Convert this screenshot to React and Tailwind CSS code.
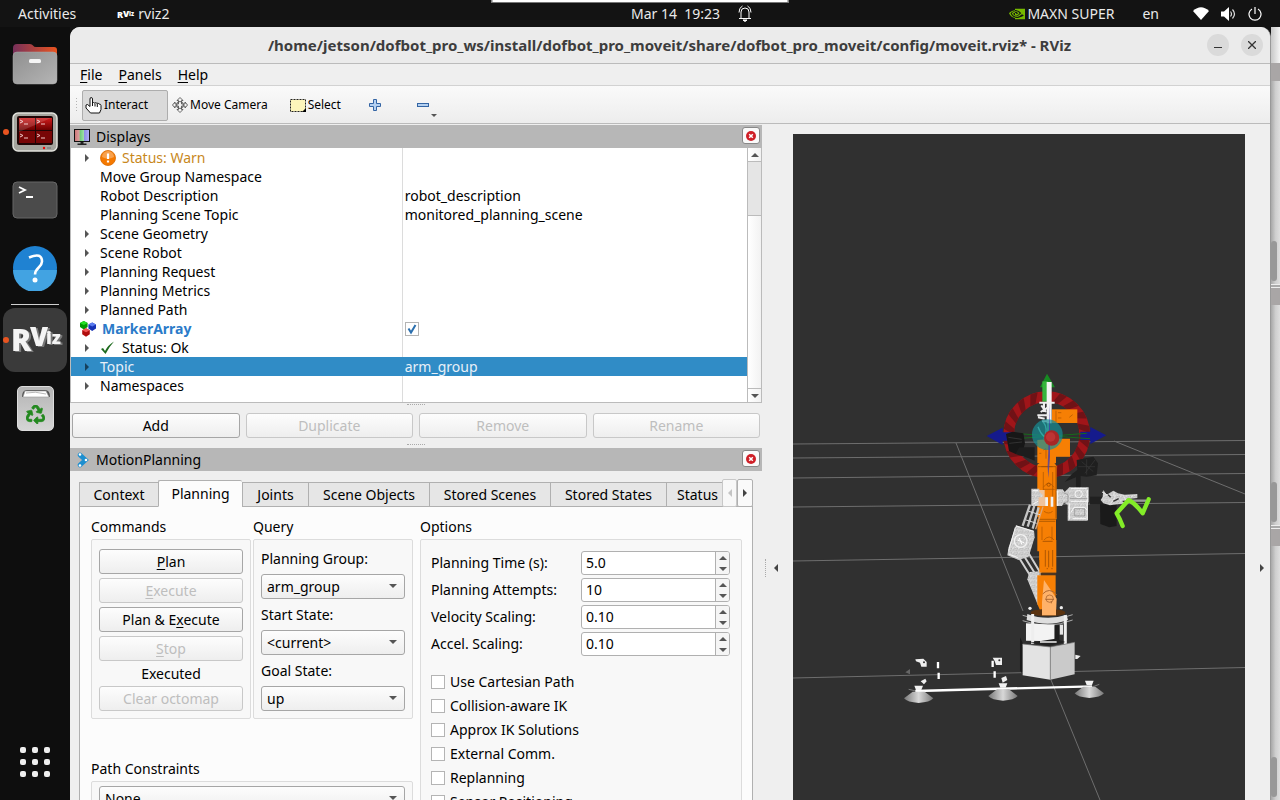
import React, { useState } from "react";
import clsx from "clsx";
import { FaRecycle } from "react-icons/fa";
import { SiNvidia } from "react-icons/si";

const TREE = [
  { label: "Status: Warn", arrow: true, icon: "warn", tone: "text-[#c8881c]" },
  { label: "Move Group Namespace" },
  { label: "Robot Description", value: "robot_description" },
  { label: "Planning Scene Topic", value: "monitored_planning_scene" },
  { label: "Scene Geometry", arrow: true },
  { label: "Scene Robot", arrow: true },
  { label: "Planning Request", arrow: true },
  { label: "Planning Metrics", arrow: true },
  { label: "Planned Path", arrow: true },
  { label: "MarkerArray", icon: "marker", top: true, check: true },
  { label: "Status: Ok", arrow: true, icon: "ok" },
  { label: "Topic", arrow: true, value: "arm_group", selected: true },
  { label: "Namespaces", arrow: true },
];

const TABS = [
  { label: "Context", width: "w-[79px]" },
  { label: "Planning", width: "w-[84px]" },
  { label: "Joints", width: "w-[66px]" },
  { label: "Scene Objects", width: "w-[121px]" },
  { label: "Stored Scenes", width: "w-[121px]" },
  { label: "Stored States", width: "w-[116px]" },
  { label: "Status", width: "w-[78px]" },
];

const SPINS = [
  ["Planning Time (s):", "5.0"],
  ["Planning Attempts:", "10"],
  ["Velocity Scaling:", "0.10"],
  ["Accel. Scaling:", "0.10"],
];

const CHECKS = [
  "Use Cartesian Path",
  "Collision-aware IK",
  "Approx IK Solutions",
  "External Comm.",
  "Replanning",
  "Sensor Positioning",
];

const Triangle = ({ dir, className }) => {
  const shapes = {
    up: ["0 0 8 5", "0,5 4,0 8,5", "w-2 h-1"],
    down: ["0 0 8 5", "0,0 4,5 8,0", "w-2 h-1"],
    left: ["0 0 5 8", "5,0 0,4 5,8", "w-1 h-2"],
    right: ["0 0 5 8", "0,0 5,4 0,8", "w-1 h-2"],
  };
  const [box, points, size] = shapes[dir];
  return (
    <svg viewBox={box} preserveAspectRatio="none" className={clsx("shrink-0 fill-current", size, className)}>
      <polygon points={points} />
    </svg>
  );
};

/* ---------- top bar ---------- */

const TopBar = () => (
  <header className="relative flex h-[27px] shrink-0 items-center bg-[#131313] text-sm text-[#eaeaea]">
    <div className="absolute left-1/2 top-0 h-[3px] w-[297px] -translate-x-1/2 border border-t-0 border-[#777] bg-white" />
    <div className="flex flex-1 items-center">
      <button className="ml-[18px]">Activities</button>
      <button className="ml-10 flex items-center gap-1">
        <svg
          viewBox="0 0 18 14"
          className="h-3.5 w-[18px] overflow-visible"
          fill="#fff"
          fontWeight="900"
          fontFamily="Noto Sans, sans-serif"
        >
          <text x="1" y="11" fontSize="9">
            R
          </text>
          <text x="7" y="10" fontSize="9">
            V
          </text>
          <text x="13" y="9" fontSize="6">
            iz
          </text>
        </svg>
        rviz2
      </button>
    </div>
    <button className="ml-[103px] flex items-center">
      <span className="whitespace-pre">Mar 14  19:23</span>
      <svg viewBox="0 0 14 17" className="ml-[18px] h-[17px] w-3.5 fill-none stroke-white">
        <path d="M3 13.5V7a4 4 0 0 1 8 0v6.500M1 13.500h12M1 7.500Q1 2.500 4.500 1M13 7.500Q13 2.500 9.500 1" />
        <path d="M5 15h4l-2 1.500z" fill="#fff" />
      </svg>
    </button>
    <div className="flex flex-1 items-center justify-end">
      <SiNvidia size={16} className="text-[#76b900]" />
      <span className="ml-0.5">MAXN SUPER</span>
      <button className="ml-7">en</button>
      <button className="ml-[34px] mr-[18px] flex items-center gap-3" aria-label="System menu">
        <svg viewBox="0 0 16 13" className="h-[13px] w-4 fill-white">
          <path d="M0 4Q8-3.500 16 4L8 13z" />
        </svg>
        <svg viewBox="0 0 15 14" className="h-3.5 w-[15px]">
          <path d="M0 4.500h3L8 0v14L3 9.500H0z" fill="#fff" />
          <path d="M9.500 4.500q2 2.500 0 5M11.500 2.500q4 4.500 0 9" fill="none" stroke="#ddd" strokeWidth="1.200" />
        </svg>
        <svg viewBox="0 0 14 14" className="h-3.5 w-3.5 fill-none stroke-white">
          <path d="M4 2a6 6 0 1 0 6 0M7 0v7" strokeWidth="1.200" />
        </svg>
      </button>
    </div>
  </header>
);

/* ---------- dock ---------- */

const FilesIcon = () => (
  <svg viewBox="0 0 46 46" className="h-[46px] w-[46px]">
    <defs>
      <linearGradient id="folderBack">
        <stop offset="0" stopColor="#77305a" />
        <stop offset="1" stopColor="#e95420" />
      </linearGradient>
      <linearGradient id="folderFront" x1="0" y1="0" x2="1" y2="1">
        <stop offset="0" stopColor="#8f8f8f" />
        <stop offset="1" stopColor="#b5b5b5" />
      </linearGradient>
    </defs>
    <path d="M1 7q0-4 4-4h13q2 0 3 1.500T24 6h18q3 0 3 3v18H1z" fill="url(#folderBack)" />
    <rect x="1" y="11" width="44" height="32" rx="4" fill="url(#folderFront)" stroke="#aaa" strokeWidth=".5" />
    <rect x="17" y="18" width="12" height="4" rx="1.500" fill="#f5f5f5" />
  </svg>
);

const TerminatorIcon = () => (
  <svg viewBox="0 0 46 42" className="h-[42px] w-[46px]">
    <defs>
      <linearGradient id="termRed" x1="0" y1="0" x2="0" y2="1">
        <stop offset="0" stopColor="#d01c1c" />
        <stop offset="1" stopColor="#6c0000" />
      </linearGradient>
    </defs>
    <rect x="1" y="2" width="44" height="38" rx="5" fill="#a5a59e" stroke="#e2e2dc" strokeWidth="1.500" />
    <rect x="5" y="5" width="36" height="29" rx="2" fill="#200606" />
    <rect x="7" y="7" width="16" height="12" fill="url(#termRed)" />
    <rect x="24" y="7" width="16" height="12" fill="url(#termRed)" />
    <rect x="7" y="20" width="16" height="12" fill="#780606" />
    <rect x="24" y="20" width="16" height="12" fill="#780606" />
    <path
      d="M8 9l3 1.500-3 1.500M12 13h4M25 9l3 1.500-3 1.500M29 13h4M8 23l3 1.500-3 1.500M12 27h4M25 23l3 1.500-3 1.500M29 27h4"
      fill="none"
      stroke="#f0c8c8"
    />
    <path d="M7 7h32l-32 14z" fill="#fff" opacity=".15" />
    <circle cx="32" cy="37" r="1.200" fill="#e00" />
    <rect x="35" y="36" width="4" height="2" fill="#888" />
  </svg>
);

const TerminalIcon = () => (
  <svg viewBox="0 0 46 38" className="h-[38px] w-[46px]">
    <rect x="1" y="1" width="44" height="36" rx="4" fill="#4b4b4b" stroke="#676767" />
    <path d="M7 6l6 3-6 3M14 16h7" fill="none" stroke="#fff" strokeWidth="1.800" />
  </svg>
);

const HelpIcon = () => (
  <svg viewBox="0 0 46 46" className="h-[46px] w-[46px]">
    <circle cx="23" cy="23" r="22" fill="#1f82d2" />
    <path d="M1 25a22 22 0 0 0 44 0z" fill="#42a3e2" />
    <path d="M17 12.500Q30 7 30 16.500c0 6-7 6-7 13" fill="none" stroke="#fff" strokeWidth="2.600" />
    <circle cx="23" cy="35" r="2.500" fill="#fff" />
  </svg>
);

const RVizLogo = () => (
  <svg
    viewBox="0 0 64 64"
    className="h-16 w-16 drop-shadow-[2px_1px_0_#777]"
    fontFamily="Noto Sans, sans-serif"
    fontWeight="900"
    fill="#f4f4f4"
  >
    <text x="8" y="43" fontSize="30">
      R
    </text>
    <text x="27" y="38" fontSize="26">
      V
    </text>
    <text x="43" y="36" fontSize="18">
      iz
    </text>
  </svg>
);

const TrashIcon = () => (
  <span className="relative flex h-[45px] w-[37px] items-end justify-center rounded-[5px] border border-[#ddd] bg-linear-to-b from-[#b4b4b4] to-[#d5d5d5] pb-1.5">
    <svg viewBox="0 0 30 9" className="absolute left-[3px] top-0.5 h-[9px] w-[30px]">
      <path d="M1 8Q1 1 6 1h18q5 0 5 7z" fill="#555" />
      <path d="M2 8l2-6h21l3 6z" fill="#fff" stroke="#999" strokeWidth=".6" />
      <path d="M5 4q9-2 20 1" fill="none" stroke="#999" strokeWidth=".7" />
    </svg>
    <FaRecycle size={19} className="text-[#23891f]" stroke="#23891f" strokeWidth={20} />
  </span>
);

const DockButton = ({ label, running, active, children }) => (
  <button
    aria-label={label}
    className={clsx("relative flex h-16 w-16 items-center justify-center rounded-[12px]", active && "bg-[#3a3a3a]")}
  >
    {running && <span className="absolute left-0 top-1/2 h-1.5 w-1.5 -translate-y-1/2 rounded-full bg-[#e95420]" />}
    {children}
  </button>
);

const Dock = () => (
  <nav className="flex w-[70px] shrink-0 flex-col items-center gap-1 bg-[#0e0e0e] pt-[5px]">
    <DockButton label="Files">
      <FilesIcon />
    </DockButton>
    <DockButton label="Terminator" running>
      <TerminatorIcon />
    </DockButton>
    <DockButton label="Terminal">
      <TerminalIcon />
    </DockButton>
    <DockButton label="Help">
      <HelpIcon />
    </DockButton>
    <div className="-mb-px h-px w-12 shrink-0 bg-[#cfcfcf]" />
    <DockButton label="RViz" active running>
      <RVizLogo />
    </DockButton>
    <DockButton label="Trash">
      <TrashIcon />
    </DockButton>
    <button aria-label="Show applications" className="mb-[23px] mt-auto grid grid-cols-3 gap-1.5">
      {Array.from({ length: 9 }, (_, i) => (
        <span key={i} className="h-1.5 w-1.5 rounded-[2px] bg-[#eee]" />
      ))}
    </button>
  </nav>
);

/* ---------- window chrome ---------- */

const TitleBar = () => (
  <div className="flex h-[37px] shrink-0 items-center rounded-t-[10px] border-b border-[#bbb] bg-[#ebebeb]">
    <div className="w-[62px]" />
    <h1 className="flex-1 whitespace-nowrap text-center text-[15px] font-bold text-[#3d3d3d]">
      /home/jetson/dofbot_pro_ws/install/dofbot_pro_moveit/share/dofbot_pro_moveit/config/moveit.rviz* - RViz
    </h1>
    <div className="mr-[7px] flex gap-3">
      <button aria-label="Minimize" className="flex h-[22px] w-[22px] items-center justify-center rounded-full bg-[#dadada]">
        <span className="mt-1 h-px w-2 bg-[#333]" />
      </button>
      <button aria-label="Close" className="flex h-[22px] w-[22px] items-center justify-center rounded-full bg-[#dadada]">
        <svg viewBox="0 0 8 8" className="h-2 w-2 stroke-[#333]">
          <path d="M0 0l8 8M8 0L0 8" strokeWidth="1.300" />
        </svg>
      </button>
    </div>
  </div>
);

const MenuBar = () => (
  <div className="flex h-[22px] shrink-0 items-center gap-4 border-b border-[#d2d2d2] pl-2.5 text-sm text-black">
    {["File", "Panels", "Help"].map((m) => (
      <button key={m}>
        <u className="underline-offset-2">{m[0]}</u>
        {m.slice(1)}
      </button>
    ))}
  </div>
);

const Toolbar = () => (
  <div className="flex h-[38px] shrink-0 items-center border-b border-[#bbb] bg-linear-to-b from-[#fafafa] to-[#ededed] pl-[5px] pt-px text-xs text-black">
    <div className="mr-[3px] h-4 w-1 bg-[radial-gradient(#b5b5b5_1px,transparent_1px)] bg-[size:3px_3px]" />
    <button className="flex h-[31px] w-[86px] items-center gap-0.5 rounded-[2px] border border-[#adadad] bg-[#dadada] pl-[2px]">
      <svg viewBox="0 0 17 17" className="h-[17px] w-[17px]">
        <path
          d="M5 9V2q0-1.500 1.200-1.500T7.500 2v4q1-1 2 0 1.300-.8 2.400.3 1.600-.5 2.100.700 2 0 2 1.500v4l-1.500 3.500H5.500L1 11V8l1.500-.5L5 9.500z"
          fill="#fff"
          stroke="#111"
        />
        <path d="M7.500 6v3M10 6.500v3M12.300 7v3" stroke="#111" fill="none" />
      </svg>
      Interact
    </button>
    <button className="ml-1 flex items-center gap-0.5">
      <svg viewBox="0 0 16 16" className="h-4 w-4" fill="#f4f4f4" stroke="#555" strokeWidth=".9">
        <path d="M8 .5l3 3H9.500V7H13V5l2.500 3-2.500 3V9H9.500v3.500H11l-3 3-3-3h1.500V9H3v2L.5 8 3 5v2h3.500V3.500H5z" />
        <circle cx="8" cy="8" r="3.500" fill="none" />
      </svg>
      Move Camera
    </button>
    <button className="ml-[22px] flex items-center gap-0.5">
      <svg viewBox="0 0 16 13" className="h-[13px] w-4">
        <rect x=".5" y=".5" width="15" height="12" fill="#fdf5bb" stroke="#222" strokeDasharray="2 1" />
        <path d="M16 9v4h-4z" fill="#000" />
      </svg>
      Select
    </button>
    <button aria-label="Add tool" className="ml-7">
      <svg viewBox="0 0 12 12" className="h-3 w-3">
        <path d="M4.500.5h3v4h4v3h-4v4h-3v-4h-4v-3h4z" fill="#b5d1f1" stroke="#3465a4" />
      </svg>
    </button>
    <button aria-label="Remove tool" className="relative ml-9">
      <svg viewBox="0 0 12 4" className="h-1 w-3">
        <rect x=".5" y=".5" width="11" height="3" fill="#b5d1f1" stroke="#3465a4" />
      </svg>
      <svg viewBox="0 0 6 3" className="absolute -bottom-2.5 -right-2 h-[3px] w-1.5 fill-[#555]">
        <path d="M0 0h6L3 3z" />
      </svg>
    </button>
  </div>
);

const PanelHeader = ({ icon, title }) => (
  <div className="flex h-[23px] shrink-0 items-center bg-[#b7b7b7] pl-1 pr-0.5 text-sm text-black">
    <span className="flex w-[22px] items-center">{icon}</span>
    <h2 className="flex-1">{title}</h2>
    <button
      aria-label={`Close ${title}`}
      className="mb-0.5 flex h-[17px] w-[18px] items-center justify-center rounded-[3px] border border-[#888] bg-[#fafafa]"
    >
      <svg viewBox="0 0 10 10" className="h-2.5 w-2.5">
        <circle cx="5" cy="5" r="5" fill="#cf1f27" />
        <path d="M3.200 3.200l3.600 3.600M6.800 3.200L3.200 6.800" stroke="#fff" strokeWidth="1.500" />
      </svg>
    </button>
  </div>
);

const Grip = ({ className }) => (
  <div className={clsx("flex shrink-0 items-start justify-center pt-px", className)}>
    <div className="w-[18px] border-t border-dotted border-[#aaa]" />
  </div>
);

const PushButton = ({ children, disabled }) => (
  <button
    disabled={disabled}
    className={clsx(
      "h-[25px] w-full rounded-[3px] border bg-linear-to-b from-[#fdfdfd] to-[#eeeeee] text-sm leading-[23px]",
      disabled ? "border-[#c8c8c8] text-[#bebebe]" : "border-[#a6a6a6] text-black"
    )}
  >
    {children}
  </button>
);

/* ---------- displays panel ---------- */

const DisplaysIcon = () => (
  <svg viewBox="0 0 16 16" className="h-4 w-4">
    <defs>
      <linearGradient id="screen">
        <stop offset="0" stopColor="#d07878" />
        <stop offset=".3" stopColor="#d9a0a0" />
        <stop offset=".36" stopColor="#6fc97a" />
        <stop offset=".62" stopColor="#9be0a4" />
        <stop offset=".68" stopColor="#8f8fe6" />
        <stop offset="1" stopColor="#b0b0f6" />
      </linearGradient>
    </defs>
    <rect width="16" height="13" fill="#111" />
    <rect x="1" y="1" width="14" height="11" fill="url(#screen)" />
    <path d="M6.500 13h3v1.500h3V16h-9v-1.500h3z" fill="#222" />
  </svg>
);

const RowIcon = ({ name }) => {
  if (name === "warn")
    return (
      <svg viewBox="0 0 16 16" className="mr-1.5 h-4 w-4">
        <circle cx="8" cy="8" r="7.500" fill="#f57900" stroke="#d86a00" strokeWidth=".8" />
        <path d="M2 7a6 6 0 0 1 12 0q-6 3-12 0z" fill="#fff" opacity=".3" />
        <path d="M8 3.500v5.500M8 10.500v2" stroke="#fff" strokeWidth="2.200" />
      </svg>
    );
  if (name === "ok")
    return (
      <svg viewBox="0 0 16 16" className="mr-1.5 h-4 w-4">
        <path d="M1 9l2-1 2 3Q8 5 14 1.500 9 7 5.500 14z" fill="#1e6b1e" />
      </svg>
    );
  const cube = (x, y, base, light) => (
    <g key={base} transform={`translate(${x} ${y})`}>
      <path d="M0 2l3.800-2 3.800 2v4l-3.800 2.500L0 6z" fill={base} />
      <path d="M0 2l3.800-2 3.800 2-3.800 2z" fill={light} />
    </g>
  );
  return (
    <svg viewBox="0 0 16 16" className="mr-1.5 h-4 w-4">
      {cube(0, 0, "#009a00", "#25e025")}
      {cube(8.4, 1.5, "#1733b5", "#5b7cf0")}
      {cube(2.2, 7.3, "#b00d0d", "#f05555")}
    </svg>
  );
};

const DisplayTree = () => (
  <div className="flex h-[255px] shrink-0 border border-t-0 border-[#bbb] bg-white">
    <table className="h-full flex-1 table-fixed border-collapse text-sm text-black">
      <colgroup>
        <col className="w-[49%]" />
        <col />
      </colgroup>
      <tbody>
        {TREE.map((row) => (
          <tr key={row.label} className={clsx("h-[19px]", row.selected && "bg-[#308cc6] text-[#e8f0f8]")}>
            <td className={clsx("border-r p-0 leading-[19px]", row.selected ? "border-[#308cc6]" : "border-[#dcdcdc]")}>
              <div className={clsx("flex h-[19px] items-center whitespace-nowrap", row.top ? "pl-[9px]" : "pl-3.5")}>
                {!row.top && (
                  <span className="flex w-[15px]">
                    {row.arrow && (
                      <Triangle dir="right" className={row.selected ? "text-[#16405c]" : "text-[#555]"} />
                    )}
                  </span>
                )}
                {row.icon && <RowIcon name={row.icon} />}
                <span className={clsx(row.tone, row.top && "font-bold text-[#2b7bc9]")}>{row.label}</span>
              </div>
            </td>
            <td className="p-0 pl-[2px] leading-[19px]">
              {row.value}
              {row.check && <CheckBox label={row.label} defaultChecked />}
            </td>
          </tr>
        ))}
        <tr>
          <td className="border-r border-[#dcdcdc] p-0" />
          <td className="p-0" />
        </tr>
      </tbody>
    </table>
    <div className="flex w-3.5 shrink-0 flex-col border-l border-[#bbb] bg-linear-to-r from-white to-[#f2f2f2] text-[#555]">
      <button aria-label="Scroll up" className="flex h-[13px] items-center justify-center">
        <Triangle dir="up" />
      </button>
      <div className="h-[55px] border-y border-[#bbb] bg-[#e5e5e5]" />
      <div className="flex-1" />
      <button aria-label="Scroll down" className="flex h-3.5 items-center justify-center border-t border-[#bbb]">
        <Triangle dir="down" />
      </button>
    </div>
  </div>
);

const CheckBox = ({ id, label, defaultChecked }) => (
  <span className="relative block h-3.5 w-3.5 shrink-0">
    <input
      id={id}
      aria-label={id ? undefined : label}
      type="checkbox"
      defaultChecked={defaultChecked}
      className="peer block h-3.5 w-3.5 appearance-none border border-[#b4b4b4] bg-white"
    />
    <svg
      viewBox="0 0 14 14"
      className="pointer-events-none absolute inset-0 hidden fill-none stroke-[#2b6fae] peer-checked:block"
    >
      <path d="M3.500 6.500L6 10.500 10.500 3" strokeWidth="2" />
    </svg>
  </span>
);

/* ---------- motion planning panel ---------- */

const MotionIcon = () => (
  <svg viewBox="0 0 12 16" className="ml-[3px] h-4 w-3">
    <path d="M3 3l5.500 5-5.500 5" fill="none" stroke="#1d8fd0" strokeWidth="4.500" strokeLinecap="round" />
    <circle cx="3" cy="2.500" r="1.300" fill="#fff" />
    <circle cx="9" cy="8" r="1.300" fill="#fff" />
    <circle cx="3" cy="13.500" r="1.300" fill="#fff" />
  </svg>
);

const Combo = ({ id, label, value }) => (
  <div className="relative">
    <select
      id={id}
      aria-label={label}
      defaultValue={value}
      className="block h-[25px] w-full appearance-none rounded-[3px] border border-[#a6a6a6] bg-linear-to-b from-[#fdfdfd] to-[#eeeeee] pl-[5px] text-sm leading-[23px] text-black"
    >
      <option>{value}</option>
    </select>
    <Triangle dir="down" className="pointer-events-none absolute right-2 top-2.5 text-[#555]" />
  </div>
);

const Group = ({ title, className, children }) => (
  <section className={clsx("flex min-w-0 flex-col", className)}>
    <h3 className="h-[22px] text-sm leading-5 text-black">{title}</h3>
    <div className="flex-1 rounded-[2px] border border-[#dcdcdc] bg-[#f8f8f8]">{children}</div>
  </section>
);

const Spin = ({ label, value }) => (
  <div className="flex h-6 items-center">
    <label htmlFor={label} className="w-[150px] shrink-0">
      {label}
    </label>
    <div className="flex h-6 min-w-0 flex-1 overflow-hidden rounded-[3px] border border-[#b0b0b0] bg-white">
      <input id={label} defaultValue={value} className="w-full min-w-0 flex-1 bg-transparent pl-1 text-sm outline-none" />
      <div className="flex w-3.5 shrink-0 flex-col border-l border-[#b0b0b0] bg-[#f5f5f5] text-[#555]">
        <button aria-label={`${label} up`} className="flex flex-1 items-center justify-center">
          <Triangle dir="up" />
        </button>
        <button aria-label={`${label} down`} className="flex flex-1 items-center justify-center">
          <Triangle dir="down" />
        </button>
      </div>
    </div>
  </div>
);

const PlanningTab = () => (
  <div className="flex min-h-0 flex-1 items-start overflow-hidden border border-[#b0b0b0] border-b-0 bg-[#fcfcfc] pl-[11px] pr-2.5 pt-2.5 text-sm text-black">
    <div className="w-[322px] shrink-0">
      <div className="flex gap-0.5">
        <Group title="Commands" className="w-[160px]">
          <div className="flex flex-col gap-1 px-[7px] pb-[7px] pt-[9px]">
            <PushButton>
              <u className="underline-offset-2">P</u>lan
            </PushButton>
            <PushButton disabled>
              <u className="underline-offset-2">E</u>xecute
            </PushButton>
            <PushButton>
              Plan &amp; E<u className="underline-offset-2">x</u>ecute
            </PushButton>
            <PushButton disabled>
              <u className="underline-offset-2">S</u>top
            </PushButton>
            <p className="text-center leading-[17px]">Executed</p>
            <PushButton disabled>Clear octomap</PushButton>
          </div>
        </Group>
        <Group title="Query" className="flex-1">
          <div className="px-[7px] pb-[7px] pt-[3px]">
            {[
              ["Planning Group:", "arm_group"],
              ["Start State:", "<current>"],
              ["Goal State:", "up"],
            ].map(([label, value]) => (
              <div key={label} className="flex h-14 flex-col">
                <label htmlFor={label} className="h-[31px] leading-[31px]">
                  {label}
                </label>
                <Combo id={label} value={value} />
              </div>
            ))}
          </div>
        </Group>
      </div>
      <Group title="Path Constraints" className="mt-10">
        <div className="px-[7px] py-1">
          <Combo id="constraints" label="Path Constraints" value="None" />
        </div>
      </Group>
    </div>
    <Group title="Options" className="ml-[7px] flex-1">
      <div className="py-[11px] pl-2.5 pr-[11px]">
        <div className="flex flex-col gap-[3px]">
          {SPINS.map(([label, value]) => (
            <Spin key={label} label={label} value={value} />
          ))}
        </div>
        <div className="mt-3.5">
          {CHECKS.map((label) => (
            <div key={label} className="flex h-6 items-center gap-[5px]">
              <CheckBox id={label} />
              <label htmlFor={label}>{label}</label>
            </div>
          ))}
        </div>
      </div>
    </Group>
  </div>
);

const MotionPlanning = () => {
  const [tab, setTab] = useState("Planning");
  return (
    <div className="flex min-h-0 flex-1 flex-col px-[9px] pt-[9px]">
      <div className="relative z-10 -mb-px flex h-[27px] shrink-0 items-end text-sm text-black" role="tablist">
        <div className="flex h-full min-w-0 flex-1 items-end overflow-hidden">
          {TABS.map(({ label, width }) => (
            <button
              key={label}
              role="tab"
              aria-selected={tab === label}
              onClick={() => setTab(label)}
              className={clsx(
                "shrink-0 whitespace-nowrap border border-r-0 border-[#b0b0b0]",
                width,
                label === "Status" ? "pl-2.5 text-left" : "text-center",
                tab === label ? "h-[27px] rounded-t-[2px] border-b-[#fcfcfc] bg-[#fcfcfc]" : "h-[25px] bg-[#e6e6e6]"
              )}
            >
              {label}
            </button>
          ))}
        </div>
        <button
          aria-label="Scroll tabs left"
          className="flex h-7 w-[15px] shrink-0 items-center justify-center rounded-[2px] border border-[#c8c8c8] bg-[#f8f8f8] text-[#c4c4c4]"
        >
          <Triangle dir="left" />
        </button>
        <button
          aria-label="Scroll tabs right"
          className="flex h-7 w-4 shrink-0 items-center justify-center rounded-[2px] border border-[#b0b0b0] bg-[#fafafa] text-[#444]"
        >
          <Triangle dir="right" />
        </button>
      </div>
      <PlanningTab />
    </div>
  );
};

/* ---------- 3D view ---------- */

// one dark, slanted stripe of the rotation ring
const ringStripe = (i, count) => {
  const step = (Math.PI * 2) / count;
  const at = (angle, r) => `${200 + r * Math.cos(angle)},${224 + r * Math.sin(angle)}`;
  const a = i * step;
  return [at(a, 98), at(a + step / 2, 98), at(a + step * 0.9, 130), at(a + step * 0.4, 130)].join(" ");
};

const Arm = () => (
  <g transform="translate(980 360) scale(.3333)">
    {/* interactive ring */}
    <circle cx="200" cy="224" r="114" fill="none" stroke="#a01519" strokeWidth="32" />
    {Array.from({ length: 18 }, (_, i) => (
      <polygon key={i} points={ringStripe(i, 18)} fill="#701216" />
    ))}
    <path d="M20 228l48-25v14h30v25H68v13z" fill="#151a8c" />
    <path d="M379 226l-48-25v14h-30v25h30v12z" fill="#151a8c" />
    <path d="M100 220l230 16M110 236l210-16" stroke="#176b1b" strokeWidth="3" />
    <path d="M180 82l21-41 24 41z" fill="#178a22" />
    <rect x="187" y="64" width="17" height="61" fill="#36b53c" />

    {/* dark links */}
    <path d="M78 222l20-7 32 5 5 30-8 28-20 4-20-9z" fill="#171717" />
    <path d="M118 262h46v40l-20-8-38-12z" fill="#1d1d1d" />
    <path d="M290 300l50-10 14 20-4 36-30 4-18-2v34h-14v-30l-34 14 22-24 16-12z" fill="#1f1f1f" />
    <path d="M305 305l35 30M345 300l-30 40M295 320h50M320 298v46" stroke="#383838" strokeWidth="2" />
    <path d="M360 420h50v78l-22 4-27-10z" fill="#1a1a1a" />
    <path d="M330 410h46v24h-46z" fill="#202020" />
    <path d="M85 232l40 6M88 250l38-4" stroke="#333" strokeWidth="3" />

    {/* orange links */}
    <rect x="216" y="148" width="76" height="41" fill="#f67f04" />
    <path d="M218 236h52v54h-42v20h-56v-70z" fill="#f67f04" />
    <path d="M172 314l16-12h30l12 16v160h-2v122h-50v-26h-6v-96l4-4-4-4z" fill="#f67f04" />
    <path
      d="M228 152v34M234 158h10M234 174h10M268 172l10-8M190 336v94M218 336v94M184 320h34M192 454q14 10 26 0M190 382q16-24 32 0M190 388h34M186 500v50M216 500v40M190 542q18-22 34 0M188 552h34M184 576v24M196 576v24M208 576v24M190 270l8-4v30M178 280h6"
      stroke="#a85300"
      strokeWidth="2"
      fill="none"
    />
    <circle cx="206" cy="374" r="5" fill="none" stroke="#914600" strokeWidth="2" />
    <circle cx="208" cy="566" r="4" fill="none" stroke="#914600" strokeWidth="2" />
    <path d="M174 320h54M174 478h54M176 484h50M228 320v155" stroke="#8f4800" strokeWidth="2" />

    {/* pale arm */}
    <path d="M172 390h22v22h8v26h-30z" fill="#efc39c" />
    <path
      d="M154 386h24v10l10 8v8h-12v26h-22zM230 388h18l6 8 14-14h58v44l-3 4v52h-60v-48l-11-6-6 10h-12z"
      fill="url(#mesh)"
    />
    <path d="M196 412h8v26h-8zM212 410h8v30h-8zM230 392h4v46h-4z" fill="#f2f2f2" />
    <path
      d="M158 392h16M160 432l14-8M272 386h48M272 424h50M274 456l8-14h32l6 8M278 476h40M322 390v90M268 430v48"
      stroke="#f8f8f8"
      strokeWidth="3"
      fill="none"
    />
    <path d="M250 398l14 6v20l-14 6M270 416h52M284 446h30v22h-30z" stroke="#8c8c8c" strokeWidth="2" fill="none" />
    <circle cx="296" cy="402" r="11" fill="none" stroke="#f4f4f4" strokeWidth="3" />
    <path d="M150 434l-22 64M163 438l-20 62M176 442l-18 64" stroke="#c4c4c4" strokeWidth="7" />
    <path d="M189 440l-22 68" stroke="#dba77c" strokeWidth="4" />
    <path d="M146 454l34 10M138 480l32 10" stroke="#dcdcdc" strokeWidth="3" />
    <path d="M108 496l54 16 2 20-18 58-30 10-34-14 4-24z" fill="url(#mesh)" />
    <path d="M108 498l52 16M86 582l30 12M106 502l-20 70" stroke="#f4f4f4" strokeWidth="3" fill="none" />
    <circle cx="122" cy="543" r="19" fill="none" stroke="#f2f2f2" strokeWidth="4" />
    <path d="M112 540l20 8M118 534l8 20" stroke="#fff" strokeWidth="3" />

    {/* gripper */}
    <path
      d="M370 390l10 14 20-12 14 8 20 4 38-2v12l-34 4 20 10-40 4-28 4-20-6-8-10 6-10z"
      fill="url(#mesh)"
    />
    <path d="M366 396l18 10M392 430l14-18M430 406l10 20M402 396v14" stroke="#e6e6e6" strokeWidth="3" fill="none" />
    <path d="M384 404l8 8M400 424l16-8M428 424h14" stroke="#333" strokeWidth="4" />
    <path d="M446 422h52" stroke="#999" strokeWidth="7" />
    <path
      d="M428 498q-8-22-18-38l36-40q20 10 42 40l18-42"
      fill="none"
      stroke="#83ec28"
      strokeWidth="13"
      strokeLinecap="round"
      strokeLinejoin="round"
    />
    <path d="M200 66h15v124h-15z" fill="#f4f4f4" />
    <path
      d="M178 128h46M184 136l14 20M172 166h40M192 126v30M182 156l22-14M174 172l20 4M186 184h24"
      stroke="#eee"
      strokeWidth="6"
      fill="none"
    />

    <circle cx="202" cy="224" r="46" fill="#168f96" opacity=".7" />
    <path d="M190 186q16 20 2 50M204 190v60M174 200q18 50 64 34" fill="none" stroke="#44c5c2" strokeWidth="4" opacity=".6" />
    <path d="M210 130v160l-5 64-2-34z" fill="#453fae" opacity=".8" />
    <circle cx="215" cy="234" r="23" fill="#a82626" />
    <circle cx="212" cy="231" r="14" fill="#bd3434" />
  </g>
);

const Base = () => (
  <g transform="translate(890 540) scale(.3333)">
    <path d="M384 48l36 58M402 48l34 54M416 40l36 60" stroke="#cfcfcf" strokeWidth="6" />
    <path d="M412 118l6-22 34-2 2 66-10 36z" fill="url(#mesh)" />

    <path d="M448 0h51v98h-51z" fill="#f67f04" />
    <path d="M442 106h55v116h-42l-13-30z" fill="#f67f04" />
    <path d="M462 120l38 56-2 50h-42v-40z" fill="#ffb268" />
    <path d="M448 102h50M466 30v50M476 32v50M488 30v50M458 4h30M470 86h4M484 86h4" stroke="#8c4300" strokeWidth="2" />
    <path d="M458 162q20-22 42 2M466 178h26M484 184v30" fill="none" stroke="#b06830" strokeWidth="3" />
    <circle cx="479" cy="176" r="11" fill="none" stroke="#9b5a2a" strokeWidth="2" />

    <ellipse cx="474" cy="218" rx="52" ry="11" fill="#5a3310" />
    <path d="M456 190h42v36h-42z" fill="#ffb268" />
    <path d="M398 226q76 28 150-2M398 242q76 28 150-2" fill="none" stroke="#aaa" strokeWidth="3" />
    <path d="M412 222q60 22 118 2l4 16q-60 22-124 0z" fill="#dedede" />
    <path d="M408 250l86 4v50l-86-2z" fill="#f3f3f3" />
    <path d="M428 222v90M526 226v86" stroke="#eee" strokeWidth="9" />
    <path d="M514 254v30" stroke="#e5e5e5" strokeWidth="10" />
    <path d="M494 256h14v50h-14z" fill="#1d1d1d" />
    <path d="M420 308l76-12 30 10-50 12z" fill="#222" />
    <path d="M450 306h50" stroke="#ddd" strokeWidth="5" />
    <circle cx="420" cy="205" r="5" fill="#eee" />
    <circle cx="514" cy="203" r="5" fill="#eee" />
    <path d="M390 292l8 16v94l-8-10z" fill="#1a1a1a" />
    <path d="M398 312l83 9v98l-83-13z" fill="#e3e3e3" />
    <path d="M481 321l73-14v96l-73 16z" fill="#cacaca" />
    <path d="M398 312l83 9 73-14M481 321v98" fill="none" stroke="#777" strokeWidth="2" />
    <path d="M556 344l16 4-10 9h-6z" fill="#eee" />

    {/* foot rail */}
    <path d="M56 448l26 6 530-15 16-6" fill="none" stroke="#777" strokeWidth="3" />
    <path d="M76 453l530-14" stroke="#fff" strokeWidth="7" />
    {[
      [86, 455],
      [339, 448],
      [598, 440],
    ].map(([x, y]) => (
      <g key={x} transform={`translate(${x} ${y})`}>
        <path d="M-18 0h36l26 20q-10 12-44 14-34-2-44-14z" fill="url(#cup)" />
        <path d="M-13-18h26l-5 13h-16z" fill="#f2f2f2" />
      </g>
    ))}
    <path d="M76 358l24-2 10 10v14h-16l-4-12-12-4zM308 353h28v22h-18l-4-12zM92 424l14-8 4 8-8 9zM334 414l14-6 4 12-14 8z" fill="#eee" />
    <path d="M144 366v19M146 398v19M308 362v19M314 394v19" stroke="#fff" strokeWidth="7" />
    <circle cx="102" cy="367" r="3" fill="#333" />
    <circle cx="328" cy="361" r="3" fill="#333" />
    <path d="M46 397l14-10v16z" fill="#666" />
  </g>
);

const Viewport = () => (
  <div className="min-w-0 grow-[452] basis-0 overflow-hidden bg-[#303030]">
    <svg viewBox="793 134 452 666" preserveAspectRatio="xMidYMid slice" className="h-full w-full">
      <defs>
        <linearGradient id="cup">
          <stop offset="0" stopColor="#777" />
          <stop offset=".5" stopColor="#d8d8d8" />
          <stop offset="1" stopColor="#777" />
        </linearGradient>
        <pattern id="mesh" width="17" height="13" patternUnits="userSpaceOnUse">
          <rect width="17" height="13" fill="#cbcbcb" />
          <path d="M1 2l6 4M9 1l5 7M3 9h5M11 11l4-3M15 2v4" stroke="#eee" strokeWidth="2" />
          <path d="M2 6l3 2M8 8l3-4M13 10h3M6 12l3-2" stroke="#8e8e8e" strokeWidth="1.500" />
        </pattern>
      </defs>
      <path
        d="M793 444L1245 440.500M793 458L1245 454.500M793 478L1245 473.500M793 507L1245 502.500M793 561L1245 553.500M793 678L1245 667.500M956 443L1023 611M1051 680L1100 800M1114 441L1245 494"
        fill="none"
        stroke="#6e6e6e"
      />
      <Arm />
      <Base />
    </svg>
  </div>
);

/* ---------- windows behind ---------- */

const BackgroundStrip = () => (
  <div className="flex w-[9px] shrink-0 flex-col overflow-hidden bg-linear-to-r from-[#a8a8a8] via-[#cecece] to-[#dedede]">
    <div className="h-9 bg-linear-to-r from-[#c8c8c8] to-[#f4f4f4]" />
    <div className="h-[18px] bg-[#a9a6a6]" />
    <div className="mt-40 h-10 w-1.5 rounded-full bg-[#989898]" />
    <div className="mt-[3px] h-1 border-y border-[#eee] bg-[#aaa]" />
    <div className="h-[17px] bg-[#a9a6a6]" />
    <div className="mt-[177px] h-10 w-1.5 rounded-full bg-[#989898]" />
    <div className="mt-[3px] h-1 border-y border-[#eee] bg-[#aaa]" />
    <div className="h-[17px] bg-[#a9a6a6]" />
    <div className="mt-auto mb-[3px] h-10 w-1.5 rounded-full bg-[#989898]" />
  </div>
);

const RVizWindow = () => (
  <main className="flex min-w-0 flex-1 flex-col rounded-t-[10px] border-r border-[#999] bg-[#efefef]">
    <TitleBar />
    <MenuBar />
    <Toolbar />
    <div className="flex min-h-0 flex-1 pt-px">
      <div className="flex min-w-0 grow-[692] basis-0 flex-col">
        <PanelHeader title="Displays" icon={<DisplaysIcon />} />
        <DisplayTree />
        <Grip className="h-2.5" />
        <div className="grid shrink-0 grid-cols-4 gap-1.5 px-0.5">
          <PushButton>Add</PushButton>
          <PushButton disabled>Duplicate</PushButton>
          <PushButton disabled>Remove</PushButton>
          <PushButton disabled>Rename</PushButton>
        </div>
        <Grip className="mt-[5px] h-[5px]" />
        <PanelHeader title="MotionPlanning" icon={<MotionIcon />} />
        <MotionPlanning />
      </div>
      <button aria-label="Collapse left panels" className="flex w-[31px] shrink-0 items-center gap-2 pl-[3px] pt-[210px] text-[#444]">
        <span className="h-[18px] border-l border-dotted border-[#aaa]" />
        <Triangle dir="left" />
      </button>
      <div className="flex min-w-0 grow-[452] basis-0 pt-[9px]">
        <Viewport />
      </div>
      <button aria-label="Collapse right panels" className="flex w-[25px] shrink-0 items-center justify-end pr-1.5 pt-[210px] text-[#444]">
        <Triangle dir="right" />
      </button>
    </div>
  </main>
);

export default function App() {
  return (
    <div className="flex h-screen flex-col overflow-hidden bg-[#131313] font-['Noto_Sans','Open_Sans',sans-serif]">
      <TopBar />
      <div className="flex min-h-0 flex-1">
        <Dock />
        <RVizWindow />
        <BackgroundStrip />
      </div>
    </div>
  );
}
